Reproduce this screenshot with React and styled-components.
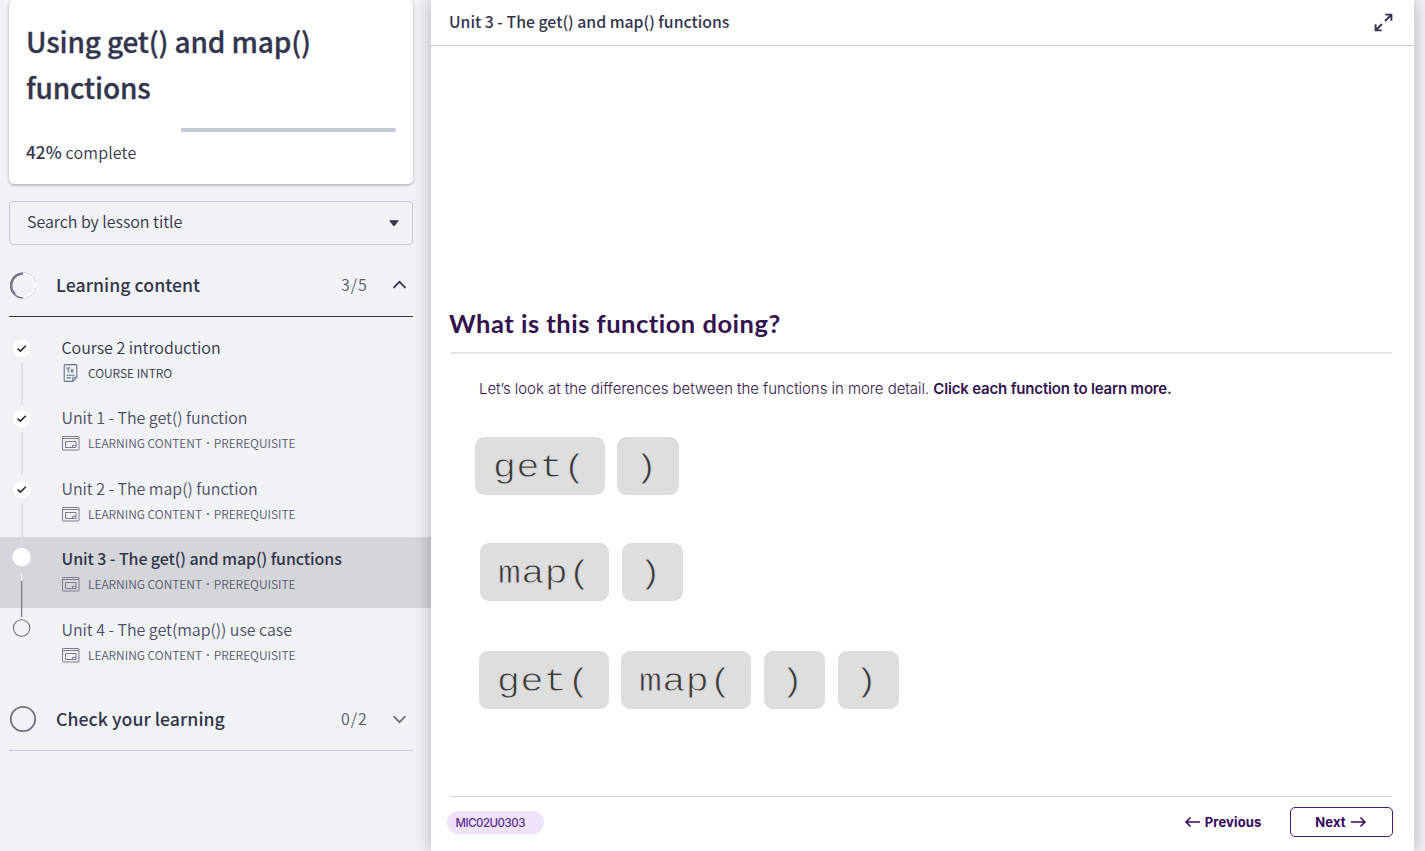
import React from 'react';
import styled, { createGlobalStyle } from 'styled-components';

const Global = createGlobalStyle`
  * { box-sizing: border-box; }
  body { margin: 0; background: #f1f2f4; overflow: hidden; }
  h1, h2, h3, p, ul, ol { margin: 0; padding: 0; font-weight: inherit; }
  ul, ol { list-style: none; }
  button { font: inherit; background: none; border: 0; padding: 0; color: inherit; }
`;

const ink = '#33354d';
const muted = '#5a5b70';
const line = '#c7c9d6';
const plum = '#32134e';

const Page = styled.div`
  display: flex;
  width: 1425px;
  height: 851px;
  overflow: hidden;
  background: #f1f2f4;
  color: ${ink};
  font-family: 'Noto Sans CJK SC', 'Noto Sans', sans-serif;
`;

const Sidebar = styled.aside`
  width: 431px;
  flex: none;
  display: flex;
  flex-direction: column;
`;

const CourseCard = styled.section`
  margin: 0 18px 0 9px;
  height: 184px;
  padding: 18px 17px 0 17px;
  background: #fff;
  border-radius: 5px;
  box-shadow: 0 1px 3px rgba(40, 42, 60, 0.4);
`;

const CourseTitle = styled.h1`
  font-size: 28px;
  line-height: 46px;
  font-weight: 500;
  letter-spacing: -0.15px;
  -webkit-text-stroke: 0.3px ${ink};
`;

const Progress = styled.div`
  height: 4px;
  margin-top: 18px;
  display: flex;
  justify-content: flex-end;
  border-radius: 2px;
  overflow: hidden;
`;

const ProgressRest = styled.div`
  width: 215px;
  background: #c7c9d6;
`;

const ProgressLabel = styled.p`
  margin-top: 8px;
  font-size: 16px;
  line-height: 24px;
  font-weight: 350;
  letter-spacing: 0.17px;
  strong { font-size: 17px; font-weight: 500; }
`;

const Search = styled.div`
  margin: 17px 18px 0 9px;
  height: 44px;
  padding: 0 13px 4px 17px;
  display: flex;
  align-items: center;
  justify-content: space-between;
  border: 1px solid ${line};
  border-radius: 4px;
  font-size: 16px;
  line-height: 24px;
  font-weight: 350;
  letter-spacing: -0.03px;
  svg { margin-top: 4px; }
`;

const SectionHeader = styled.header`
  margin: ${(p) => p.$top}px 18px 0 9px;
  height: 63px;
  display: flex;
  align-items: center;
  border-bottom: 1px solid ${(p) => (p.$open ? ink : line)};
`;

const SectionName = styled.h2`
  flex: 1;
  margin-left: 19px;
  padding-bottom: 2px;
  font-size: 17.7px;
  line-height: 26px;
  font-weight: 500;
  letter-spacing: 0.04px;
`;

const Count = styled.span`
  width: 45px;
  padding-bottom: 2px;
  font-size: 16px;
  line-height: 24px;
  font-weight: 350;
  letter-spacing: 1px;
  color: ${muted};
`;

const LessonList = styled.ol`
  margin-top: 8.5px;
  margin-bottom: 9.75px;
`;

const Lesson = styled.li`
  height: 70.55px;
  display: flex;
  background: ${(p) => (p.$current ? '#d5d6da' : 'transparent')};
`;

const Track = styled.div`
  width: 61.5px;
  flex: none;
  svg { display: block; overflow: visible; }
`;

const LessonText = styled.div`
  padding-top: 9.3px;
`;

const LessonTitle = styled.h3`
  font-size: 16px;
  line-height: 24px;
  letter-spacing: ${(p) => (p.$current ? '-0.1px' : '-0.04px')};
  color: ${(p) => (p.$current || p.$strong ? ink : '#4d4e65')};
  font-weight: ${(p) => (p.$current ? 500 : 350)};
`;

const Meta = styled.p`
  display: flex;
  align-items: center;
  height: 20px;
  margin-top: 4.500px;
  gap: 8.500px;
  font-size: 12px;
  line-height: 20px;
  font-weight: 350;
  letter-spacing: -0.02px;
  color: ${(p) => (p.$strong ? ink : muted)};
  svg { flex: none; }
`;

const Dot = styled.span`
  margin: 0 1.500px 0 1.500px;
  font-family: 'Noto Sans', sans-serif;
  font-weight: 600;
`;

const Panel = styled.main`
  width: 983px;
  flex: none;
  display: flex;
  flex-direction: column;
  background: #fff;
  box-shadow: 0 0 16px rgba(40, 44, 56, 0.32);
`;

const PanelHeader = styled.header`
  height: 46px;
  padding: 0 21px 1px 18px;
  display: flex;
  align-items: center;
  justify-content: space-between;
  border-bottom: 1px solid ${line};
  font-size: 15.8px;
  line-height: 24px;
  font-weight: 500;
`;

const Stage = styled.section`
  flex: 1;
  padding: 259px 22px 0 20px;
  color: ${plum};
`;

const Question = styled.h2`
  margin-left: -2px;
  height: 47px;
  font-family: Lato, sans-serif;
  font-size: 25.5px;
  line-height: 36px;
  font-weight: 700;
  letter-spacing: 0.5px;
`;

const Intro = styled.p`
  border-top: 2px solid #e9e4e8;
  padding: 23px 0 0 28px;
  height: 85px;
  font-family: Inter, sans-serif;
  font-size: 15px;
  line-height: 24px;
  font-weight: 300;
  letter-spacing: -0.05px;
  white-space: nowrap;
  strong { font-weight: 600; letter-spacing: -0.17px; }
`;

const ChipRow = styled.div`
  display: flex;
  gap: 12.8px;
  margin: 0 0 ${(p) => p.$below}px ${(p) => p.$indent}px;
`;

const Chip = styled.button`
  width: ${(p) => (p.$wide ? 129.5 : 61.3)}px;
  height: 57.5px;
  padding-right: ${(p) => (p.$wide ? 0 : 5)}px;
  border-radius: 9px;
  background: #dedede;
  color: #3a3a3a;
  font-family: 'Liberation Mono', monospace;
  font-size: 33px;
  line-height: 63px;
  text-align: center;
  overflow: hidden;
`;

const Code = styled.span`
  display: inline-block;
  transform: scaleX(1.18);
  -webkit-text-stroke: 0.8px #dedede;
`;

const Footer = styled.footer`
  margin: 0 22px 0 20px;
  height: 55px;
  padding-bottom: 4px;
  display: flex;
  align-items: center;
  border-top: 1px solid #d6cdd0;
  font-family: Inter, sans-serif;
  color: #35075f;
`;

const Badge = styled.span`
  width: 97px;
  height: 23px;
  margin-left: -4.500px;
  padding-left: 9px;
  border-radius: 12px;
  background: #efe3fa;
  color: #5c2a8c;
  font-size: 11.5px;
  line-height: 24px;
  font-weight: 500;
  letter-spacing: -0.5px;
`;

const NavButton = styled.button`
  height: 30px;
  display: flex;
  align-items: center;
  justify-content: center;
  gap: 5px;
  font-family: Inter, sans-serif;
  font-size: 13px;
  font-weight: 700;
  letter-spacing: 0.15px;
  margin-left: ${(p) => (p.$outlined ? '28.5px' : 'auto')};
  margin-right: ${(p) => (p.$outlined ? '-1px' : '0')};
  padding-right: ${(p) => (p.$outlined ? '2px' : '0')};
  width: ${(p) => (p.$outlined ? '103px' : 'auto')};
  border: ${(p) => (p.$outlined ? '1px solid #4a1a78' : '0')};
  border-radius: 5px;
`;

const Check = () => (
  <path d="M17.600 22.500l2.700 2.600 5.600-5.400" fill="none" stroke="#222" strokeWidth="1.5" />
);

function Marker({ state }) {
  return (
    <Track>
      <svg width="44" height="70" viewBox="0 0 44 70">
        {state === 'done' && (
          <>
            <circle cx="21.7" cy="22.5" r="8.7" fill="#fff" />
            <Check />
            <path d="M22 36v43" stroke="#dddee2" strokeWidth="1.6" />
          </>
        )}
        {state === 'current' && (
          <>
            <circle cx="21.6" cy="20" r="9.2" fill="#fff" />
            <path d="M21.6 36v8" stroke="#f1f1f4" strokeWidth="1.2" />
            <path d="M21.6 44v36" stroke="#7b7c90" strokeWidth="1.3" />
          </>
        )}
        {state === 'todo' && (
          <circle cx="21.6" cy="20" r="8.2" fill="none" stroke="#6f7085" strokeWidth="1.1" />
        )}
      </svg>
    </Track>
  );
}

const PageIcon = () => (
  <svg width="18" height="18" viewBox="0 0 18 18" fill="none" stroke="#62748c" strokeWidth="1.1">
    <path d="M3.200.6h10.600a1 1 0 0 1 1 1v11.600l-4 4.200H3.200a1 1 0 0 1-1-1V1.600a1 1 0 0 1 1-1z" />
    <path d="M10.800 17.400v-4.200h4M4.500 11.200h8M4.500 13.900h4.500" />
    <path d="M4.200 4h4M6.200 4v4.400M8.700 5l2.700 3.400M11.400 5L8.700 8.400" />
  </svg>
);

const LessonIcon = () => (
  <svg width="18" height="15" viewBox="0 0 18 15" fill="none" stroke="#7b7c90" strokeWidth="1">
    <rect x=".5" y=".5" width="16.500" height="13.500" rx=".6" />
    <path d="M.5 2.500h16.500" />
    <path d="M3.500 5.500h10.500v6h-10.500z" />
    <path d="M10.500 11.500V9.300H14" />
  </svg>
);

const Chevron = ({ up }) => (
  <svg width="27" height="14" viewBox="0 0 27 14" fill="none" stroke={up ? ink : '#6f7085'} strokeWidth="1.8">
    <path d={up ? 'M7.500 9.800L13.500 3.800l6 6' : 'M7.500 4.200l6 6 6-6'} />
  </svg>
);

const PartialRing = () => (
  <svg width="28" height="28" viewBox="0 0 28 28" fill="none">
    <circle cx="14" cy="14.500" r="12" stroke="#fff" strokeWidth="2" />
    <path d="M27 16A13 13 0 0 1 14 27.500M14 1.500A13 13 0 0 1 26.500 11" stroke="#b9bac6" strokeWidth=".6" />
    <path d="M14 2.200A12.300 12.300 0 0 0 14 26.800" stroke="#73748a" strokeWidth="1.600" />
    <path d="M14 2.700A11.800 11.800 0 0 0 6 23" stroke="#73748a" strokeWidth="2.300" />
  </svg>
);

const EmptyRing = () => (
  <svg width="28" height="28" viewBox="0 0 28 28" fill="none">
    <circle cx="14" cy="14" r="12.200" stroke="#6f7085" strokeWidth="1.800" />
  </svg>
);

const ExpandIcon = () => (
  <svg width="19" height="19" viewBox="0 0 19 19" fill="none" stroke={ink} strokeWidth="1.900">
    <path d="M11 8l6-6M11.300 1.600h6.100v6.100M8 11l-6 6M1.600 11.300v6.100h6.100" />
  </svg>
);

const Arrow = ({ left }) => (
  <svg width="15" height="12" viewBox="0 0 15 12" fill="none" stroke="#35075f" strokeWidth="1.500">
    <path d={left ? 'M15 6H1M5.500 1.500L1 6l4.500 4.500' : 'M0 6h14M9.500 1.500L14 6l-4.500 4.500'} />
  </svg>
);

const lessons = [
  { title: 'Course 2 introduction', state: 'done', intro: true },
  { title: 'Unit 1 - The get() function', state: 'done' },
  { title: 'Unit 2 - The map() function', state: 'done' },
  { title: 'Unit 3 - The get() and map() functions', state: 'current' },
  { title: 'Unit 4 - The get(map()) use case', state: 'todo' },
];

const chipRows = [
  { indent: 24, below: 48.5, parts: ['get(', ')'] },
  { indent: 28.5, below: 50.5, parts: ['map(', ')'] },
  { indent: 28, below: 0, parts: ['get(', 'map(', ')', ')'] },
];

export default function App() {
  return (
    <Page>
      <Global />
      <Sidebar>
        <CourseCard>
          <CourseTitle>Using get() and map() functions</CourseTitle>
          <Progress><ProgressRest /></Progress>
          <ProgressLabel><strong>42%</strong> complete</ProgressLabel>
        </CourseCard>
        <Search>
          Search by lesson title
          <svg width="10" height="7" viewBox="0 0 10 7"><path d="M.8.8h8.400L5 6z" fill={ink} stroke={ink} strokeLinejoin="round" /></svg>
        </Search>
        <SectionHeader $top={9} $open>
          <PartialRing />
          <SectionName>Learning content</SectionName>
          <Count>3/5</Count>
          <Chevron up />
        </SectionHeader>
        <LessonList>
          {lessons.map((l) => (
            <Lesson key={l.title} $current={l.state === 'current'}>
              <Marker state={l.state} />
              <LessonText>
                <LessonTitle $current={l.state === 'current'} $strong={l.intro}>{l.title}</LessonTitle>
                <Meta $strong={l.intro}>
                  {l.intro ? <PageIcon /> : <LessonIcon />}
                  {l.intro ? <span>COURSE INTRO</span> : (
                    <span>LEARNING CONTENT <Dot>·</Dot> PREREQUISITE</span>
                  )}
                </Meta>
              </LessonText>
            </Lesson>
          ))}
        </LessonList>
        <SectionHeader $top={0}>
          <EmptyRing />
          <SectionName>Check your learning</SectionName>
          <Count>0/2</Count>
          <Chevron />
        </SectionHeader>
      </Sidebar>
      <Panel>
        <PanelHeader>
          Unit 3 - The get() and map() functions
          <ExpandIcon />
        </PanelHeader>
        <Stage>
          <Question>What is this function doing?</Question>
          <Intro>
            Let’s look at the differences between the functions in more detail.{' '}
            <strong>Click each function to learn more.</strong>
          </Intro>
          {chipRows.map((row, i) => (
            <ChipRow key={i} $indent={row.indent} $below={row.below}>
              {row.parts.map((part, j) => (
                <Chip key={j} $wide={part.length > 1}><Code>{part}</Code></Chip>
              ))}
            </ChipRow>
          ))}
        </Stage>
        <Footer>
          <Badge>MIC02U0303</Badge>
          <NavButton><Arrow left />Previous</NavButton>
          <NavButton $outlined>Next<Arrow /></NavButton>
        </Footer>
      </Panel>
    </Page>
  );
}
